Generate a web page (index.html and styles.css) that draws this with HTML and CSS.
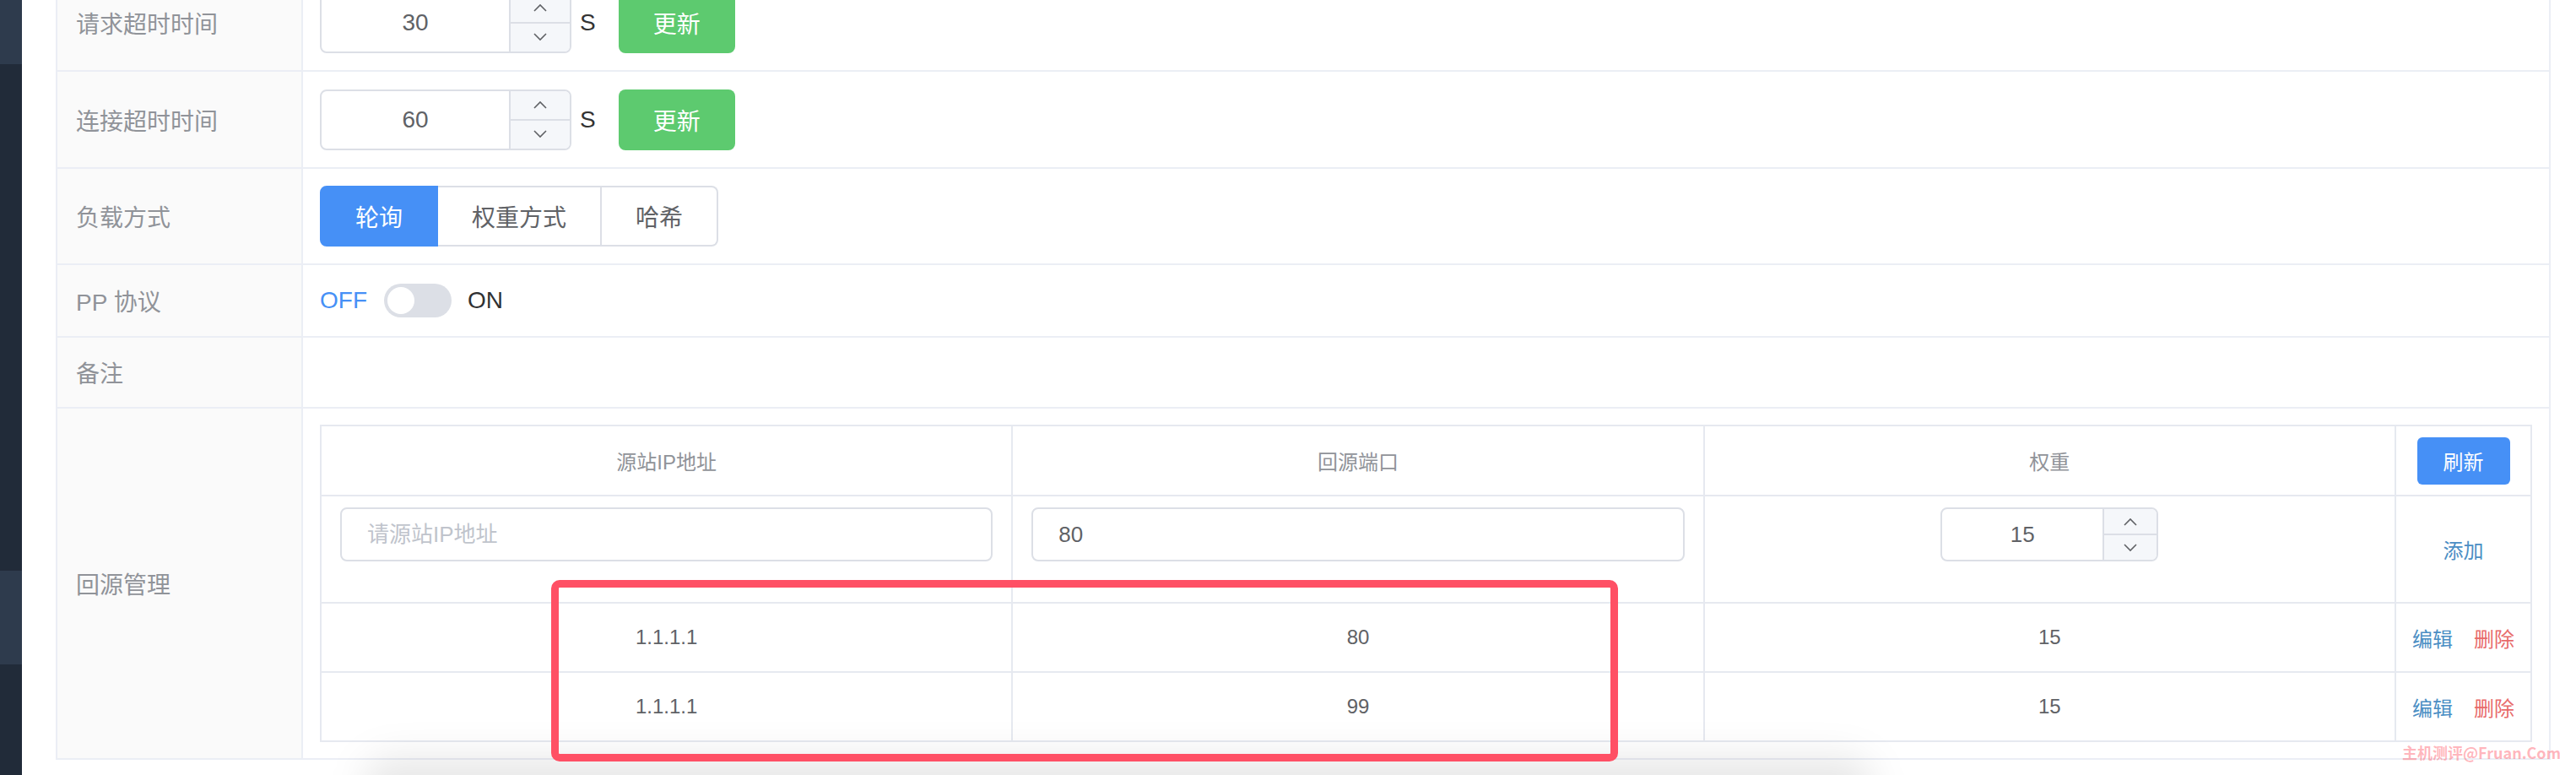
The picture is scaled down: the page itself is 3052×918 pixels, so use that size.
FILE: index.html
```html
<!DOCTYPE html>
<html lang="zh-CN">

<head>
  <meta charset="UTF-8">
  <meta name="viewport" content="width=device-width, initial-scale=1.0">
  <title>回源设置</title>
  <link rel="stylesheet" href="styles.css">
</head>

<body>
  <div class="screen">
    <div class="layout">
      <aside class="sidebar">
        <div class="menu-item"></div>
        <div class="menu-space"></div>
        <div class="menu-item menu-item-tall"></div>
      </aside>

      <main class="main">
        <table class="detail-table">
          <colgroup>
            <col class="col-label">
            <col>
          </colgroup>
          <tr class="row-control">
            <th>请求超时时间</th>
            <td>
              <div class="field">
                <div class="num-input">
                  <div class="num-value">30</div>
                  <div class="num-controls">
                    <span><svg width="16" height="10" viewBox="0 0 16 10"><polyline points="1,9 8,2 15,9" /></svg></span>
                    <span><svg width="16" height="10" viewBox="0 0 16 10"><polyline points="1,1 8,8 15,1" /></svg></span>
                  </div>
                </div>
                <span class="unit">S</span>
                <button class="btn btn-success">更新</button>
              </div>
            </td>
          </tr>
          <tr class="row-control">
            <th>连接超时时间</th>
            <td>
              <div class="field">
                <div class="num-input">
                  <div class="num-value">60</div>
                  <div class="num-controls">
                    <span><svg width="16" height="10" viewBox="0 0 16 10"><polyline points="1,9 8,2 15,9" /></svg></span>
                    <span><svg width="16" height="10" viewBox="0 0 16 10"><polyline points="1,1 8,8 15,1" /></svg></span>
                  </div>
                </div>
                <span class="unit">S</span>
                <button class="btn btn-success">更新</button>
              </div>
            </td>
          </tr>
          <tr class="row-radio">
            <th>负载方式</th>
            <td>
              <div class="radio-group">
                <span class="radio-btn active">轮询</span>
                <span class="radio-btn">权重方式</span>
                <span class="radio-btn">哈希</span>
              </div>
            </td>
          </tr>
          <tr class="row-switch">
            <th>PP 协议</th>
            <td>
              <div class="field">
                <span class="switch-label on">OFF</span>
                <span class="switch"><span class="switch-knob"></span></span>
                <span class="switch-label">ON</span>
              </div>
            </td>
          </tr>
          <tr class="row-note">
            <th>备注</th>
            <td></td>
          </tr>
          <tr class="row-origin">
            <th>回源管理</th>
            <td>
              <table class="origin-table">
                <colgroup>
                  <col>
                  <col>
                  <col>
                  <col class="col-action">
                </colgroup>
                <thead>
                  <tr>
                    <th>源站IP地址</th>
                    <th>回源端口</th>
                    <th>权重</th>
                    <th><button class="btn btn-primary btn-mini">刷新</button></th>
                  </tr>
                </thead>
                <tbody>
                  <tr class="row-add">
                    <td><input class="text-input" type="text" placeholder="请源站IP地址"></td>
                    <td><input class="text-input" type="text" value="80"></td>
                    <td>
                      <div class="num-input num-input-small">
                        <div class="num-value">15</div>
                        <div class="num-controls">
                          <span><svg width="16" height="10" viewBox="0 0 16 10"><polyline points="1,9 8,2 15,9" /></svg></span>
                          <span><svg width="16" height="10" viewBox="0 0 16 10"><polyline points="1,1 8,8 15,1" /></svg></span>
                        </div>
                      </div>
                    </td>
                    <td class="cell-action"><a class="link">添加</a></td>
                  </tr>
                  <tr class="row-data">
                    <td>1.1.1.1</td>
                    <td>80</td>
                    <td>15</td>
                    <td class="cell-action"><a class="link">编辑</a><a class="link link-danger">删除</a></td>
                  </tr>
                  <tr class="row-data">
                    <td>1.1.1.1</td>
                    <td>99</td>
                    <td>15</td>
                    <td class="cell-action"><a class="link">编辑</a><a class="link link-danger">删除</a></td>
                  </tr>
                </tbody>
              </table>
            </td>
          </tr>
        </table>
      </main>
    </div>

    <div class="drop-shadow"></div>
    <div class="mark-box"></div>
    <div class="watermark">主机测评@Fruan.Com</div>
  </div>
</body>

</html>
```

FILE: styles.css
```css
body {
  margin: 0;
  padding: 0;
  font-family: "Liberation Sans", "Noto Sans CJK SC", sans-serif;
  background-color: #fff;
  overflow: hidden;
}

.screen {
  position: relative;
  height: 918px;
  overflow: hidden;
}

.layout {
  display: flex;
  height: 918px;
  overflow: hidden;
}

.sidebar {
  width: 26px;
  flex-shrink: 0;
  display: flex;
  flex-direction: column;
  background-color: #212b39;
}

.menu-item {
  height: 76px;
  background-color: #2e3b4d;
}

.menu-space {
  height: 600px;
}

.menu-item-tall {
  height: 111px;
}

.main {
  flex: 1;
  padding: 0 30px 0 40px;
}

/* 表单表格 */
.detail-table {
  width: 100%;
  margin-top: -32px;
  border-collapse: collapse;
  table-layout: fixed;
}

.col-label {
  width: 291px;
}

.detail-table > tbody > tr > th,
.detail-table > tbody > tr > td {
  border: 2px solid #ebeef5;
}

.detail-table > tbody > tr > th {
  padding: 0 0 0 22px;
  text-align: left;
  font-weight: normal;
  font-size: 28px;
  color: #909399;
  background-color: #fafafa;
}

.detail-table > tbody > tr > td {
  padding: 0 20px;
  vertical-align: middle;
}

.row-control {
  height: 115px;
}

.row-radio {
  height: 114px;
}

.row-switch {
  height: 86px;
}

.row-note {
  height: 84px;
}

.row-origin {
  height: 416px;
}

.field {
  display: flex;
  align-items: center;
}

/* 数字输入框 */
.num-input {
  display: inline-flex;
  box-sizing: border-box;
  width: 298px;
  height: 72px;
  border: 2px solid #dcdfe6;
  border-radius: 8px;
  overflow: hidden;
  background-color: #fff;
}

.num-value {
  flex: 1;
  display: flex;
  align-items: center;
  justify-content: center;
  font-size: 28px;
  color: #606266;
}

.num-controls {
  width: 70px;
  display: flex;
  flex-direction: column;
  border-left: 2px solid #dcdfe6;
  background-color: #f5f7fa;
}

.num-controls span {
  flex: 1;
  display: flex;
  align-items: center;
  justify-content: center;
}

.num-controls span + span {
  border-top: 2px solid #dcdfe6;
}

.num-controls polyline {
  fill: none;
  stroke: #606266;
  stroke-width: 1.6;
}

.num-input-small {
  width: 258px;
  height: 64px;
}

.num-input-small .num-value {
  font-size: 26px;
}

.num-input-small .num-controls {
  width: 62px;
}

.unit {
  margin: 0 27px 0 10px;
  font-size: 28px;
  color: #333;
}

/* 按钮 */
.btn {
  box-sizing: border-box;
  height: 72px;
  padding: 0 41px;
  border: none;
  border-radius: 8px;
  font-family: inherit;
  font-size: 28px;
  color: #fff;
  cursor: pointer;
}

.btn-success {
  background-color: #5dca6f;
}

.btn-primary {
  background-color: #4690f6;
}

.btn-mini {
  height: 56px;
  padding: 0 31px;
  border-radius: 6px;
  font-size: 24px;
}

/* 单选按钮组 */
.radio-group {
  display: inline-flex;
}

.radio-btn {
  box-sizing: border-box;
  height: 72px;
  display: flex;
  align-items: center;
  padding: 0 40px;
  border: 2px solid #dcdfe6;
  border-left: none;
  font-size: 28px;
  color: #606266;
}

.radio-btn:first-child {
  border-left: 2px solid #dcdfe6;
  border-radius: 8px 0 0 8px;
}

.radio-btn:last-child {
  border-radius: 0 8px 8px 0;
}

.radio-btn.active {
  background-color: #4690f6;
  border-color: #4690f6;
  color: #fff;
}

/* 开关 */
.switch-label {
  font-size: 28px;
  color: #303133;
}

.switch-label.on {
  color: #4690f6;
}

.switch {
  position: relative;
  width: 80px;
  height: 40px;
  margin: 0 19px 0 20px;
  border-radius: 20px;
  background-color: #dcdfe6;
}

.switch-knob {
  position: absolute;
  top: 4px;
  left: 4px;
  width: 32px;
  height: 32px;
  border-radius: 50%;
  background-color: #fff;
}

/* 回源表格 */
.origin-table {
  width: 100%;
  border-collapse: collapse;
  table-layout: fixed;
}

.col-action {
  width: 161px;
}

.origin-table th,
.origin-table td {
  border: 2px solid #e6e9f0;
  text-align: center;
  vertical-align: middle;
  font-size: 24px;
  color: #606266;
}

.origin-table thead tr {
  height: 83px;
}

.origin-table th {
  font-weight: normal;
  color: #909399;
}

.row-add {
  height: 127px;
}

.row-add td {
  padding: 13px 22px 0;
  vertical-align: top;
}

.row-add td.cell-action {
  padding: 0;
  vertical-align: middle;
}

.row-data {
  height: 82px;
}

.text-input {
  box-sizing: border-box;
  display: block;
  width: 100%;
  height: 64px;
  padding: 0 30px;
  border: 2px solid #dcdfe6;
  border-radius: 8px;
  font-family: inherit;
  font-size: 26px;
  color: #606266;
  outline: none;
}

.text-input::placeholder {
  color: #c0c4cc;
}

.link {
  font-size: 24px;
  color: #4b8ec4;
  cursor: pointer;
}

.link + .link {
  margin-left: 25px;
}

.link-danger {
  color: #e86a6a;
}

/* 截图标注 */
.drop-shadow {
  position: absolute;
  left: 430px;
  top: 896px;
  width: 1790px;
  height: 70px;
  border-radius: 35px;
  background-color: rgba(0, 0, 0, 0.09);
  filter: blur(22px);
  pointer-events: none;
}

.mark-box {
  position: absolute;
  left: 653px;
  top: 687px;
  box-sizing: border-box;
  width: 1264px;
  height: 215px;
  border: 9px solid #ff5065;
  border-radius: 10px;
  pointer-events: none;
}

.watermark {
  position: absolute;
  right: 18px;
  top: 878px;
  font-family: "Noto Sans CJK SC", sans-serif;
  font-size: 18px;
  font-weight: bold;
  color: rgba(255, 90, 105, 0.45);
  white-space: nowrap;
}
```
